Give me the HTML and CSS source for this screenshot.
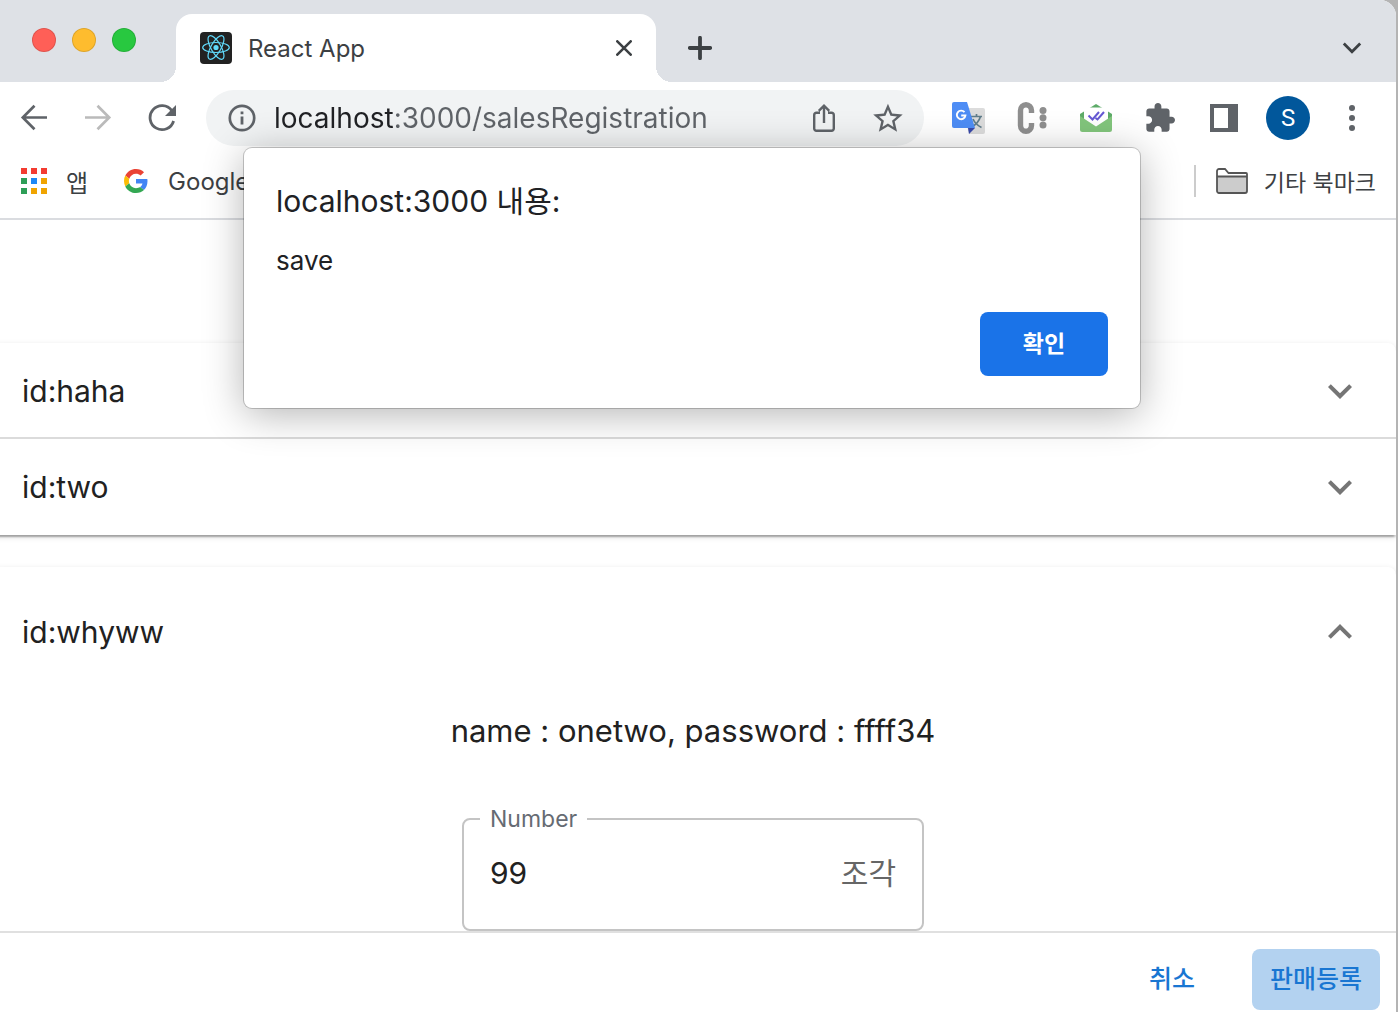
FILE: index.html
```html
<!DOCTYPE html>
<html lang="ko">
<head>
	<meta charset="UTF-8">
	<title>React App</title>
	<link rel="stylesheet" href="styles.css">
</head>
<body>
	<div class="window">

		<header class="tabstrip">
			<div class="lights">
				<span class="light red"></span>
				<span class="light yellow"></span>
				<span class="light green"></span>
			</div>
			<div class="tab">
				<svg class="favicon" width="32" height="32" viewBox="0 0 32 32">
					<rect width="32" height="32" rx="4" fill="#222"/>
					<g fill="none" stroke="#61dafb" stroke-width="1.2">
						<ellipse cx="16" cy="15.5" rx="13.3" ry="5"/>
						<ellipse cx="16" cy="15.5" rx="13.3" ry="5" transform="rotate(60 16 15.5)"/>
						<ellipse cx="16" cy="15.5" rx="13.3" ry="5" transform="rotate(120 16 15.5)"/>
					</g>
					<circle cx="16" cy="15.5" r="2.6" fill="#61dafb"/>
				</svg>
				<span class="tab-title">React App</span>
				<button class="tab-close" aria-label="Close tab">
					<svg width="16" height="16" viewBox="0 0 16 16"><path d="M1.3 1.3l13.4 13.4M14.7 1.3L1.3 14.7" stroke="#3c4043" stroke-width="2.6" stroke-linecap="round"/></svg>
				</button>
			</div>
			<button class="icon-btn" aria-label="New tab">
				<svg width="24" height="24" viewBox="0 0 24 24"><path d="M12 1.8v20.4M1.8 12h20.4" stroke="#3c4043" stroke-width="3.8" stroke-linecap="round"/></svg>
			</button>
			<button class="icon-btn tab-search" aria-label="Search tabs">
				<svg width="20" height="14" viewBox="0 0 20 14"><path d="M1.8 2.5L10 10.8l8.2-8.3" fill="none" stroke="#3c4043" stroke-width="2.8"/></svg>
			</button>
		</header>

		<nav class="toolbar">
			<button class="icon-btn" aria-label="Back">
				<svg width="28" height="28" viewBox="0 0 28 28" fill="none" stroke="#5f6368" stroke-width="2.7"><path d="M27 13.5H3M14.5 1.8L2.8 13.5l11.7 11.7"/></svg>
			</button>
			<button class="icon-btn" aria-label="Forward">
				<svg width="28" height="28" viewBox="0 0 28 28" fill="none" stroke="#bababa" stroke-width="2.7"><path d="M1 13.5h24M13.5 1.8l11.7 11.7-11.7 11.7"/></svg>
			</button>
			<button class="icon-btn" aria-label="Reload">
				<svg width="28" height="28" viewBox="0 0 28 28"><path d="M23.8 6.6A12 12 0 1 0 25.6 17" fill="none" stroke="#5f6368" stroke-width="2.8"/><path d="M28 1v11H17z" fill="#5f6368"/></svg>
			</button>
			<div class="omnibox">
				<svg class="info" width="28" height="28" viewBox="0 0 28 28"><circle cx="14" cy="14" r="12.2" fill="none" stroke="#5f6368" stroke-width="2.7"/><path d="M12.6 7.4h2.8v2.8h-2.8zM12.6 12.4h2.8v8.2h-2.8z" fill="#5f6368"/></svg>
				<input class="url" type="text" aria-label="Address" value="localhost:3000/salesRegistration">
				<button class="icon-btn" aria-label="Share">
					<svg width="24" height="30" viewBox="0 0 24 30" fill="none" stroke="#5f6368" stroke-width="2.4"><path d="M8 9.8H4.4a2.2 2.2 0 0 0-2.2 2.2v13.6a2.2 2.2 0 0 0 2.2 2.2h15.2a2.2 2.2 0 0 0 2.2-2.2V12a2.2 2.2 0 0 0-2.2-2.2H16M12 20V3M6.8 7.8L12 2.6l5.2 5.2"/></svg>
				</button>
				<button class="icon-btn" aria-label="Bookmark">
					<svg width="30" height="30" viewBox="0 0 24 24"><path d="M22 9.24l-7.19-.62L12 2 9.19 8.63 2 9.24l5.46 4.73L5.82 21 12 17.27 18.18 21l-1.63-7.03L22 9.24zM12 15.4l-3.76 2.27 1-4.28-3.32-2.88 4.38-.38L12 6.1l1.71 4.04 4.38.38-3.32 2.88 1 4.28L12 15.4z" fill="#5f6368" transform="translate(-2.2 -1.7) scale(1.18)"/></svg>
				</button>
			</div>
			<button class="icon-btn" aria-label="Google Translate">
				<svg width="34" height="34" viewBox="0 0 34 34">
					<path d="M12 7h20a2 2 0 0 1 2 2v22a2 2 0 0 1-2 2H18z" fill="#dcdcdc"/>
					<path d="M20 15.5h11M25.5 13v2.5M29.5 15.5c-1.5 5-5 8.500-9 10.500M22 18c1.500 3.500 4.500 6.500 8.500 8.500" fill="none" stroke="#607d8b" stroke-width="1.700"/>
					<path d="M17 27h7l-6 6z" fill="#3949ab"/>
					<path d="M3 1h13l8 26H3a2 2 0 0 1-2-2V3a2 2 0 0 1 2-2z" fill="#4e8df5"/>
					<path d="M13.500 11.200A4.300 4.300 0 1 0 14.400 14.500H10.200" fill="none" stroke="#fff" stroke-width="1.900"/>
				</svg>
			</button>
			<button class="icon-btn" aria-label="Extension C">
				<svg width="30" height="32" viewBox="0 0 30 32"><path d="M14.500 11V8.500a5.500 5.800 0 0 0-11 0v15a5.500 5.800 0 0 0 11 0V21" fill="none" stroke="#8f8f8f" stroke-width="5.400"/><g fill="#8f8f8f"><circle cx="26" cy="8.500" r="3.500"/><circle cx="26" cy="15.800" r="3.500"/><circle cx="26" cy="23" r="3.500"/></g></svg>
			</button>
			<button class="icon-btn" aria-label="Mail tracker">
				<svg width="32" height="30" viewBox="0 0 32 30"><path d="M0 11L16 1l16 10v5H0z" fill="#5dab68"/><path d="M4 6.500a2 2 0 0 1 2-2h20a2 2 0 0 1 2 2V20H4z" fill="#fff"/><path d="M0 13l16 10.500L32 13v13.500a2.500 2.500 0 0 1-2.500 2.500h-27A2.500 2.500 0 0 1 0 26.500z" fill="#82c57c"/><path d="M8.500 12.500l4 4 6.500-7.500M15.500 15l2 1.500L24 9" fill="none" stroke="#6558d3" stroke-width="2"/></svg>
			</button>
			<button class="icon-btn" aria-label="Extensions">
				<svg width="30" height="30" viewBox="1 1 22 22"><path d="M20.500 11H19V7c0-1.100-.9-2-2-2h-4V3.500C13 2.120 11.880 1 10.500 1S8 2.120 8 3.500V5H4c-1.100 0-1.990.9-1.990 2v3.800H3.500c1.490 0 2.700 1.210 2.700 2.700s-1.210 2.700-2.700 2.700H2V20c0 1.100.9 2 2 2h3.800v-1.500c0-1.490 1.210-2.700 2.700-2.700 1.490 0 2.700 1.210 2.700 2.700V22H17c1.100 0 2-.9 2-2v-4h1.500c1.380 0 2.500-1.120 2.500-2.500S21.880 11 20.500 11z" fill="#5f6368"/></svg>
			</button>
			<button class="icon-btn" aria-label="Side panel">
				<svg width="28" height="28" viewBox="0 0 28 28"><path d="M0 0h28v28H0zM4 4v20h14V4z" fill="#5f6368" fill-rule="evenodd"/></svg>
			</button>
			<button class="icon-btn" aria-label="Profile"><span class="avatar">S</span></button>
			<button class="icon-btn" aria-label="Menu">
				<svg width="6" height="26" viewBox="0 0 6 26" fill="#5f6368"><circle cx="3" cy="3" r="3"/><circle cx="3" cy="13" r="3"/><circle cx="3" cy="23" r="3"/></svg>
			</button>
		</nav>

		<div class="bookmarks">
			<a class="bookmark" href="#">
				<svg width="28" height="28" viewBox="0 0 28 28">
					<path d="M1 1h6v6H1zM11 1h6v6h-6zM21 1h6v6h-6z" fill="#f33c31"/>
					<path d="M1 11h6v6H1zM1 21h6v6H1z" fill="#2e9e57"/>
					<path d="M11 11h6v6h-6z" fill="#1e88f5"/>
					<path d="M21 11h6v6h-6zM11 21h6v6h-6zM21 21h6v6h-6z" fill="#f0a400"/>
				</svg>
				<span>앱</span>
			</a>
			<a class="bookmark google" href="#">
				<svg width="24" height="24" viewBox="0 0 48 48">
					<path fill="#EA4335" d="M24 9.500c3.540 0 6.710 1.220 9.210 3.600l6.850-6.850C35.900 2.380 30.470 0 24 0 14.620 0 6.510 5.380 2.560 13.220l7.980 6.190C12.430 13.720 17.740 9.500 24 9.500z"/>
					<path fill="#4285F4" d="M46.980 24.550c0-1.570-.15-3.090-.38-4.550H24v9.020h12.940c-.58 2.960-2.260 5.480-4.780 7.180l7.730 6c4.510-4.180 7.090-10.360 7.090-17.650z"/>
					<path fill="#FBBC05" d="M10.530 28.590c-.48-1.450-.76-2.990-.76-4.590s.27-3.140.76-4.590l-7.980-6.190C.92 16.460 0 20.120 0 24c0 3.880.92 7.540 2.560 10.780l7.970-6.190z"/>
					<path fill="#34A853" d="M24 48c6.480 0 11.930-2.130 15.890-5.810l-7.730-6c-2.150 1.450-4.920 2.300-8.160 2.300-6.260 0-11.570-4.220-13.470-9.910l-7.980 6.190C6.510 42.620 14.620 48 24 48z"/>
				</svg>
				<span>Google</span>
			</a>
			<a class="bookmark other" href="#">
				<svg width="32" height="26" viewBox="0 0 32 26"><path d="M1 23V3a2 2 0 0 1 2-2h6l3.500 4H30a1 1 0 0 1 1 1v17a2 2 0 0 1-2 2H3a2 2 0 0 1-2-2z" fill="#fff"/><path d="M1 8.500h30V23a2 2 0 0 1-2 2H3a2 2 0 0 1-2-2z" fill="#ccc"/><path d="M1 23V3a2 2 0 0 1 2-2h6l3.500 4H30a1 1 0 0 1 1 1v17a2 2 0 0 1-2 2H3a2 2 0 0 1-2-2zM1 8.500h30" fill="none" stroke="#555" stroke-width="1.800"/></svg>
				<span>기타 북마크</span>
			</a>
		</div>

		<main class="content">
			<div class="accordions">
				<div class="paper">
					<button class="summary">
						<span>id:haha</span>
						<svg class="chevron" viewBox="0 0 24 24"><path d="M16.590 8.590L12 13.170 7.410 8.590 6 10l6 6 6-6z"/></svg>
					</button>
					<button class="summary">
						<span>id:two</span>
						<svg class="chevron" viewBox="0 0 24 24"><path d="M16.590 8.590L12 13.170 7.410 8.590 6 10l6 6 6-6z"/></svg>
					</button>
				</div>
				<div class="paper expanded">
					<button class="summary" aria-expanded="true">
						<span>id:whyww</span>
						<svg class="chevron up" viewBox="0 0 24 24"><path d="M16.590 8.590L12 13.170 7.410 8.590 6 10l6 6 6-6z"/></svg>
					</button>
					<div class="details">
						<p class="info-line">name : onetwo, password : ffff34</p>
						<fieldset class="field">
							<legend><label for="number">Number</label></legend>
							<div class="field-row">
								<input id="number" type="text" inputmode="numeric" value="99">
								<span class="unit">조각</span>
							</div>
						</fieldset>
					</div>
				</div>
			</div>
		</main>

		<footer class="actions">
			<button class="btn">취소</button>
			<button class="btn active">판매등록</button>
		</footer>

		<dialog class="alert" open>
			<h1>localhost:3000 내용:</h1>
			<p>save</p>
			<button class="confirm">확인</button>
		</dialog>
	</div>
</body>
</html>
```

FILE: styles.css
```css
*
{
	box-sizing: border-box;
}

body
{
	margin: 0;
	padding-right: 2px;
	background: #b4b4b4;
	color: #212121;
	font-family: Inter, "Noto Sans CJK KR", sans-serif;
}

button
{
	padding: 0;
	border: 0;
	background: none;
	color: inherit;
	font-family: inherit;
	cursor: pointer;
}

input
{
	min-width: 0;
	padding: 0;
	border: 0;
	outline: 0;
	background: none;
	color: inherit;
	font-family: inherit;
}

svg
{
	display: block;
	flex: none;
}

.window
{
	position: relative;
	display: flex;
	flex-direction: column;
	min-height: 100vh;
	background: #fff;
	border-top-right-radius: 16px;
	overflow: hidden;
}

/* tab strip */
.tabstrip
{
	display: flex;
	align-items: flex-end;
	height: 82px;
	padding: 0 12px 0 32px;
	background: #dee1e6;
}

.lights
{
	display: flex;
	gap: 16px;
	align-self: flex-start;
	width: 144px;
	padding-top: 28px;
}

.light
{
	width: 24px;
	height: 24px;
	border: 1px solid rgba(0,0,0,.12);
	border-radius: 50%;
}

.red
{
	background: #ff5f57;
}

.yellow
{
	background: #febc2e;
}

.green
{
	background: #28c840;
}

.tab
{
	position: relative;
	display: flex;
	align-items: center;
	width: 480px;
	height: 68px;
	padding: 0 24px;
	background: #fff;
	border-radius: 16px 16px 0 0;
}

.tab:before, .tab:after
{
	content: "";
	position: absolute;
	bottom: 0;
	width: 16px;
	height: 16px;
}

.tab:before
{
	right: 100%;
	background: radial-gradient(circle at 0 0, #dee1e6 16px, #fff 16px);
}

.tab:after
{
	left: 100%;
	background: radial-gradient(circle at 100% 0, #dee1e6 16px, #fff 16px);
}

.tab-title
{
	flex: 1;
	padding-left: 16px;
	color: #3c4043;
	font-size: 24px;
}

.tab-close
{
	display: flex;
	justify-content: center;
	width: 16px;
}

.icon-btn
{
	display: flex;
	flex: none;
	align-items: center;
	justify-content: center;
	width: 64px;
	height: 56px;
}

.tabstrip .icon-btn
{
	height: 68px;
}

.tab + .icon-btn
{
	margin-left: 12px;
}

.tab-search
{
	margin-left: auto;
}

/* toolbar */
.toolbar
{
	display: flex;
	padding: 8px 12px 0 2px;
}

.omnibox
{
	display: flex;
	flex: 1;
	align-items: center;
	min-width: 0;
	margin: 0 12px;
	padding: 0 4px 0 22px;
	background: #f1f3f4;
	border-radius: 28px;
}

/* host part is darker than port and path */
.url
{
	flex: 1;
	height: 56px;
	padding-left: 18px;
	background: linear-gradient(90deg, #202124 137px, #5f6368 137px);
	-webkit-background-clip: text;
	background-clip: text;
	-webkit-text-fill-color: transparent;
	font-size: 28px;
}

.avatar
{
	width: 44px;
	height: 44px;
	border-radius: 50%;
	background: #01579b;
	color: #fff;
	font: 24px/44px Roboto, sans-serif;
}

/* bookmarks */
.bookmarks
{
	display: flex;
	align-items: center;
	height: 74px;
	padding: 0 20px 2px;
	border-bottom: 2px solid #dadce0;
}

.bookmark
{
	display: flex;
	align-items: center;
	gap: 18px;
	color: #3c4043;
	font-size: 24px;
	text-decoration: none;
}

.google
{
	gap: 20px;
	margin-left: 36px;
}

.other
{
	gap: 16px;
	height: 32px;
	margin-left: auto;
	padding-left: 20px;
	border-left: 2px solid #ccc;
	font-size: 23px;
}

/* page */
.content
{
	flex: 1;
	padding-top: 123px;
	background: #fff;
}

.accordions
{
	margin-left: -10px;
}

.paper
{
	border-radius: 8px 8px 0 0;
	background: #fff;
	box-shadow: 0 4px 2px -2px rgba(0,0,0,.2), 0 2px 2px rgba(0,0,0,.14), 0 2px 6px rgba(0,0,0,.12);
}

.summary
{
	display: flex;
	align-items: center;
	justify-content: space-between;
	width: 100%;
	height: 96px;
	padding: 0 32px;
	font-size: 30px;
}

.summary:first-child
{
	padding-top: 2px;
	border-bottom: 2px solid #dbdbdb;
}

.expanded
{
	margin-top: 32px;
}

.expanded .summary
{
	height: 128px;
	border: 0;
}

.chevron
{
	width: 48px;
	height: 48px;
	fill: #757575;
}

.up
{
	transform: rotate(180deg);
}

.details
{
	display: flex;
	flex-direction: column;
	align-items: center;
	padding: 16px 32px 0;
}

.info-line
{
	margin: 0 0 56px;
	font-size: 31px;
	line-height: 40px;
}

.field
{
	width: 462px;
	min-width: 0;
	margin: 0;
	padding: 0 26px 14px 16px;
	border: 2px solid #c4c4c4;
	border-radius: 8px;
}

.field legend
{
	padding: 0 10px;
	color: #666b73;
	font-size: 23px;
	line-height: 24px;
}

.field-row
{
	display: flex;
	align-items: center;
	height: 84px;
	padding-left: 10px;
	font-size: 30px;
}

.field-row input
{
	flex: 1;
	height: 48px;
	font-size: 30px;
}

.unit
{
	padding-bottom: 4px;
	color: #666;
}

.actions
{
	display: flex;
	justify-content: flex-end;
	gap: 16px;
	padding: 16px 16px 2px;
	border-top: 2px solid #e0e0e0;
	background: #fff;
	z-index: 1;
}

.btn
{
	width: 128px;
	height: 61px;
	padding-bottom: 6px;
	border-radius: 8px;
	color: #1976d2;
	font-size: 25px;
	font-weight: 500;
}

.active
{
	background: #b3d2f0;
}

/* alert box */
.alert
{
	position: absolute;
	top: 148px;
	left: 244px;
	z-index: 2;
	width: 896px;
	max-width: 100%;
	margin: 0;
	padding: 33px 32px 32px;
	border: 0;
	border-radius: 8px;
	background: #fff;
	box-shadow: 0 0 0 1px rgba(0,0,0,.2), 0 6px 40px rgba(0,0,0,.3);
	color: #202124;
}

.alert h1
{
	margin: 0 0 24px;
	font-size: 30px;
	font-weight: 400;
	line-height: 40px;
}

.alert p
{
	margin: 0 0 35px;
	font-size: 26px;
	line-height: 32px;
}

.confirm
{
	display: block;
	width: 128px;
	height: 64px;
	margin-left: auto;
	padding-bottom: 4px;
	border-radius: 8px;
	background: #1a73e8;
	color: #fff;
	font-size: 23px;
	font-weight: 700;
}
```
